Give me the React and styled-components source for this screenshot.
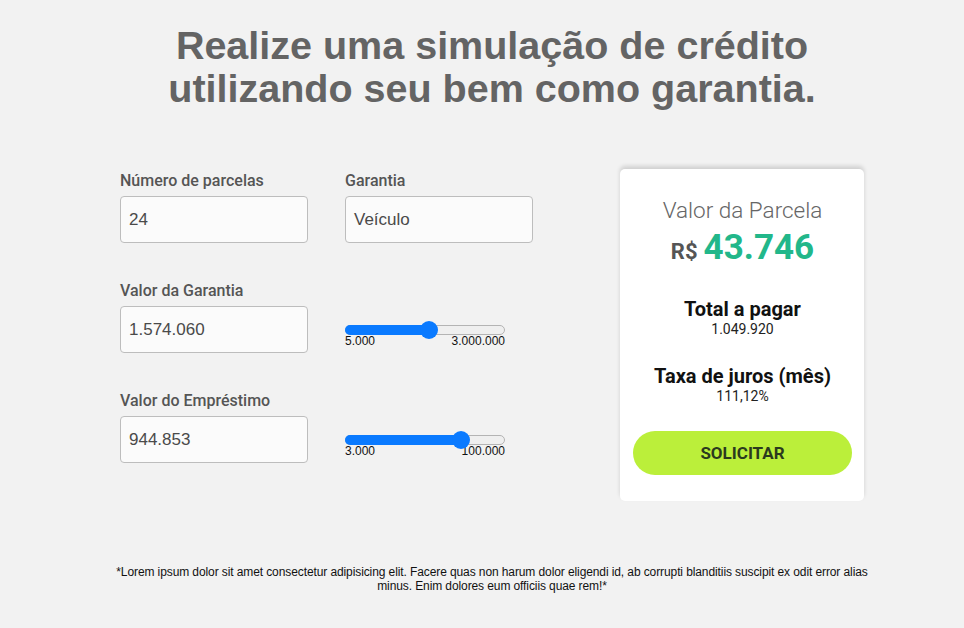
import React from 'react';
import styled, { createGlobalStyle } from 'styled-components';

const GlobalStyle = createGlobalStyle`
    body {
        margin: 0;
        background-color: #f2f2f2;
        font-family: 'Liberation Sans', Arial, sans-serif;
    }
`;

const fields = [
    {
        label: 'Número de parcelas',
        value: '24',
        side: { type: 'field', label: 'Garantia', value: 'Veículo' },
    },
    {
        label: 'Valor da Garantia',
        value: '1.574.060',
        side: { type: 'slider', min: '5.000', max: '3.000.000', pct: 52.5 },
    },
    {
        label: 'Valor do Empréstimo',
        value: '944.853',
        side: { type: 'slider', min: '3.000', max: '100.000', pct: 73 },
    },
];

const Slider = ({ min, max, pct }) => (
    <SliderBox>
        <Track>
            <Fill style={{ width: `${pct}%` }} />
            <Thumb style={{ left: `${pct}%` }} />
        </Track>
        <SliderLabels>
            <span>{min}</span>
            <span>{max}</span>
        </SliderLabels>
    </SliderBox>
);

const App = () => {
    return (
        <Page>
            <GlobalStyle />
            <Title>
                Realize uma simulação de crédito
                <br />
                utilizando seu bem como garantia.
            </Title>

            <Main>
                <Form>
                    {fields.map((row, index) => (
                        <Row key={index}>
                            <Field>
                                <Label>{row.label}</Label>
                                <Input>{row.value}</Input>
                            </Field>
                            {row.side.type === 'field' ? (
                                <Field>
                                    <Label>{row.side.label}</Label>
                                    <Input>{row.side.value}</Input>
                                </Field>
                            ) : (
                                <Slider {...row.side} />
                            )}
                        </Row>
                    ))}
                </Form>

                <Card>
                    <CardTitle>Valor da Parcela</CardTitle>
                    <Amount>
                        <Currency>R$</Currency>
                        <AmountValue>43.746</AmountValue>
                    </Amount>
                    <Info>
                        <InfoTitle>Total a pagar</InfoTitle>
                        <InfoValue>1.049.920</InfoValue>
                    </Info>
                    <Info>
                        <InfoTitle>Taxa de juros (mês)</InfoTitle>
                        <InfoValue>111,12%</InfoValue>
                    </Info>
                    <Button>SOLICITAR</Button>
                </Card>
            </Main>

            <Footnote>
                *Lorem ipsum dolor sit amet consectetur adipisicing elit. Facere
                quas non harum dolor eligendi id, ab corrupti blanditiis suscipit
                ex odit error alias minus. Enim dolores eum officiis quae rem!*
            </Footnote>
        </Page>
    );
};

export default App;

const Page = styled.div`
    display: flex;
    flex-direction: column;
    align-items: center;
    padding: 24px 0 0 20px;
    min-height: 628px;
    box-sizing: border-box;
`;

const Title = styled.h1`
    margin: 0;
    font-family: 'Liberation Sans', Arial, sans-serif;
    font-size: 39.5px;
    line-height: 43px;
    font-weight: 700;
    color: #646464;
    text-align: center;
`;

const Main = styled.div`
    display: flex;
    align-items: flex-start;
    gap: 87px;
    margin-top: 59px;
`;

const Form = styled.div`
    display: flex;
    flex-direction: column;
    gap: 39px;
    padding-top: 3px;
`;

const Row = styled.div`
    display: grid;
    grid-template-columns: 188px 188px;
    column-gap: 37px;
`;

const Field = styled.div`
    display: flex;
    flex-direction: column;
    gap: 6px;
`;

const Label = styled.label`
    font-family: Roboto, sans-serif;
    font-weight: 500;
    font-size: 16px;
    line-height: 18px;
    color: #555;
`;

const Input = styled.div`
    height: 47px;
    box-sizing: border-box;
    border: 1px solid #bdbdbd;
    border-radius: 4px;
    background-color: #fbfbfb;
    padding: 0 8px;
    display: flex;
    align-items: center;
    font-family: 'Liberation Sans', Arial, sans-serif;
    font-size: 17px;
    color: #4a4a4a;
`;

const SliderBox = styled.div`
    width: 160px;
    padding-top: 43px;
`;

const Track = styled.div`
    position: relative;
    height: 10px;
    box-sizing: border-box;
    border: 1px solid #b4b4b4;
    border-radius: 5px;
    background-color: #efefef;
`;

const Fill = styled.div`
    position: absolute;
    left: -1px;
    top: -1px;
    bottom: -1px;
    border-radius: 5px 0 0 5px;
    background-color: #0a7aff;
`;

const Thumb = styled.div`
    position: absolute;
    top: 50%;
    width: 18px;
    height: 18px;
    border-radius: 50%;
    background-color: #0a7aff;
    transform: translate(-50%, -50%);
`;

const SliderLabels = styled.div`
    display: flex;
    justify-content: space-between;
    font-family: 'Liberation Sans', Arial, sans-serif;
    font-size: 12px;
    line-height: 13px;
    color: #111;
`;

const Card = styled.div`
    width: 244px;
    box-sizing: border-box;
    background-color: #fff;
    border-radius: 5px;
    box-shadow: 0 -3px 4px rgba(0, 0, 0, 0.14);
    padding: 28px 12px 26px 13px;
    display: flex;
    flex-direction: column;
    align-items: center;
    font-family: Roboto, sans-serif;
`;

const CardTitle = styled.div`
    font-weight: 300;
    font-size: 22.5px;
    line-height: 27px;
    color: #666;
`;

const Amount = styled.div`
    display: flex;
    align-items: baseline;
    gap: 6px;
    margin-top: 3px;
    line-height: 42px;
`;

const Currency = styled.span`
    font-weight: 700;
    font-size: 22px;
    color: #555;
`;

const AmountValue = styled.span`
    font-weight: 700;
    font-size: 35px;
    color: #22b78a;
`;

const Info = styled.div`
    display: flex;
    flex-direction: column;
    align-items: center;
    margin-top: 25px;

    & + & {
        margin-top: 28px;
    }
`;

const InfoTitle = styled.div`
    font-weight: 700;
    font-size: 20px;
    line-height: 23px;
    color: #111;
`;

const InfoValue = styled.div`
    font-size: 14px;
    line-height: 16px;
    color: #222;
`;

const Button = styled.button`
    margin-top: 27px;
    width: 219px;
    height: 44px;
    border: none;
    border-radius: 22px;
    background-color: #bbef3a;
    font-family: Roboto, sans-serif;
    font-weight: 700;
    font-size: 17px;
    color: #2b3a1e;
`;

const Footnote = styled.p`
    margin: 64px 0 0;
    width: 770px;
    text-align: center;
    font-family: 'Liberation Sans', Arial, sans-serif;
    font-size: 12px;
    letter-spacing: -0.1px;
    line-height: 14px;
    color: #111;
`;
